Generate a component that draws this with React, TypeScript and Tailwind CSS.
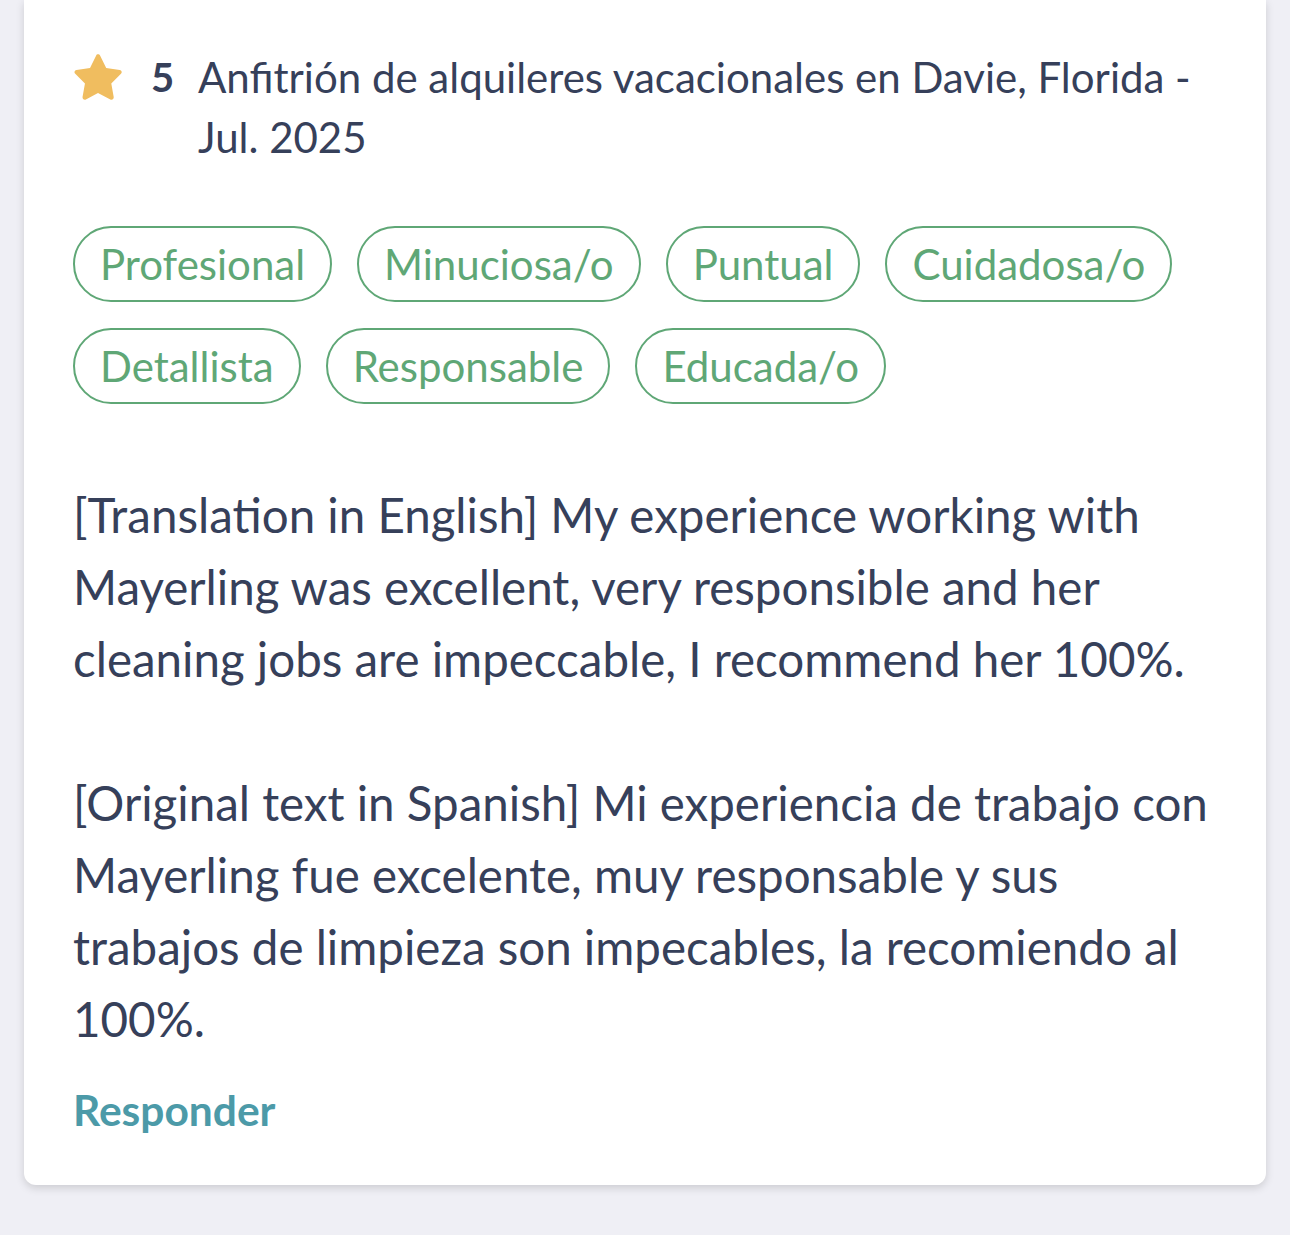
const tags = [
  ['Profesional', 'Minuciosa/o', 'Puntual', 'Cuidadosa/o'],
  ['Detallista', 'Responsable', 'Educada/o']
];

function Star() {
  return (
    <svg viewBox="0 0 24 24" className="w-[58px] h-[58px] shrink-0 -ml-[4px]">
      <path
        d="M12 2.6c.4 0 .7.2.9.6l2.5 5.1 5.6.8c.8.1 1.1 1.1.5 1.6l-4 4 1 5.6c.1.8-.7 1.4-1.4 1l-5.1-2.7-5 2.7c-.7.4-1.5-.2-1.4-1l1-5.6-4-4c-.6-.5-.3-1.5.5-1.6l5.6-.8 2.5-5.1c.1-.4.5-.6.8-.6z"
        fill="#f0bd5f"
      />
    </svg>
  );
}

export default function App() {
  return (
    <div className="min-h-[1235px] bg-[#efeff5] px-[24px] font-['Lato',sans-serif]">
      <div className="bg-white rounded-b-[12px] shadow-[0_3px_8px_rgba(0,0,0,0.15)] pl-[49px] pr-[49px] pt-[47px] pb-[52px]">
        <div className="flex items-start">
          <div className="h-[60px] flex items-center">
            <Star />
          </div>
          <span className="w-[54px] ml-[24px] text-[40px] leading-[60px] font-bold text-[#36405a]">5</span>
          <p className="text-[42px] leading-[60px] text-[#36405a]">
            Anfitrión de alquileres vacacionales en Davie, Florida - Jul. 2025
          </p>
        </div>

        <div className="mt-[59px] flex flex-col gap-[26px]">
          {tags.map((row, i) => (
            <div key={i} className="flex gap-[25px]">
              {row.map((t) => (
                <span
                  key={t}
                  className="h-[76px] px-[25px] flex items-center rounded-full border-[2.5px] border-[#5fa776] text-[#5fa776] text-[42px]"
                >
                  {t}
                </span>
              ))}
            </div>
          ))}
        </div>

        <div className="mt-[75px] text-[47.5px] leading-[72px] text-[#36405a]">
          <p>
            [Translation in English] My experience working with Mayerling was excellent, very responsible and her
            cleaning jobs are impeccable, I recommend her 100%.
          </p>
          <p className="mt-[72px]">
            [Original text in Spanish] Mi experiencia de trabajo con Mayerling fue excelente, muy responsable y sus
            trabajos de limpieza son impecables, la recomiendo al 100%.
          </p>
        </div>

        <div className="mt-[32px] text-[42.5px] leading-[46px] font-bold text-[#4c9aa8]">Responder</div>
      </div>
    </div>
  );
}
